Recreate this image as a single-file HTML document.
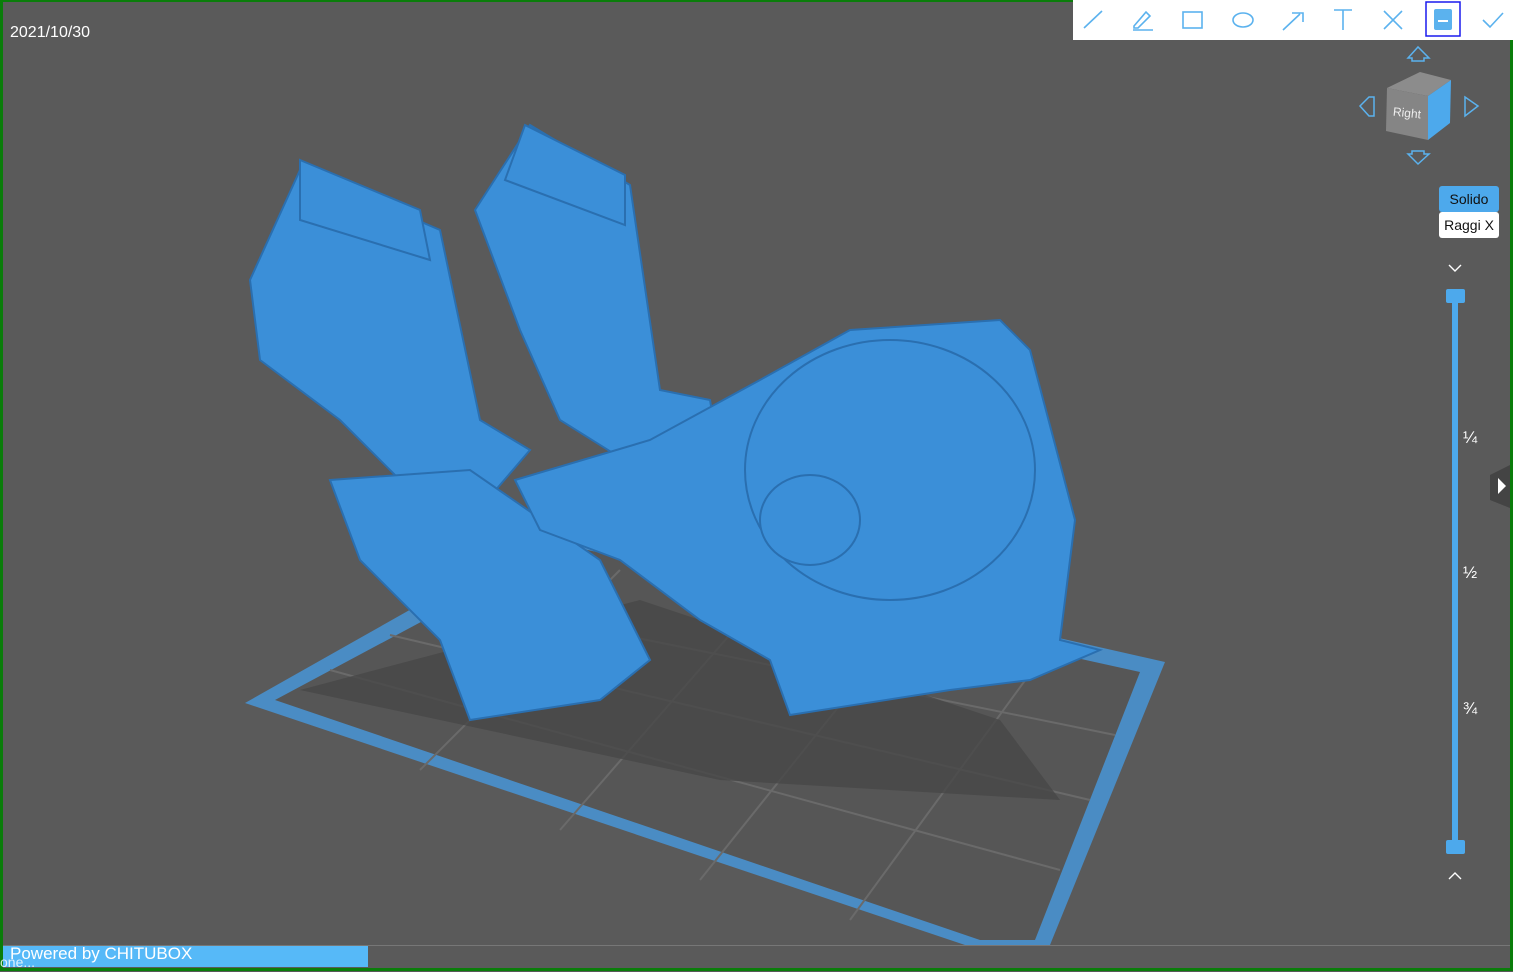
<!DOCTYPE html>
<html><head><style>
body{margin:0;width:1513px;height:972px;overflow:hidden;background:#5a5a5a;font-family:"Liberation Sans",sans-serif;}
#f{position:absolute;left:0;top:0;width:1507px;height:966px;border:3px solid #0a7d0a;border-top:2px solid #0a7d0a;background:#5a5a5a;}
</style></head><body>
<div id="f"></div>
<svg width="1513" height="972" style="position:absolute;left:0;top:0">
<polygon points="245,703 560,525 1165,662 1050,945 965,945" fill="#4a8cc4"/>
<polygon points="275,700 565,545 1140,672 1035,940 980,940" fill="#565656"/>
<g stroke="#6a6a6a" stroke-width="2">
<line x1="330" y1="670" x2="1060" y2="870"/><line x1="390" y1="635" x2="1090" y2="800"/><line x1="450" y1="600" x2="1115" y2="735"/>
<line x1="420" y1="770" x2="620" y2="570"/><line x1="560" y1="830" x2="760" y2="600"/><line x1="700" y1="880" x2="900" y2="630"/><line x1="850" y1="920" x2="1040" y2="660"/>
</g>
<polygon points="300,690 640,600 1000,720 1060,800 720,780" fill="#474747" opacity="0.8"/>
<g fill="#3b8fd8" stroke="#2a6fb0" stroke-width="2">
<polygon points="250,280 300,170 440,230 480,420 530,450 470,520 420,500 340,420 260,360"/>
<polygon points="475,210 530,125 630,185 660,390 710,400 720,460 640,470 560,420 520,330"/>
<polygon points="330,480 470,470 600,560 650,660 600,700 470,720 440,640 360,560"/>
<polygon points="515,480 650,440 760,380 850,330 1000,320 1030,350 1075,520 1060,640 1100,650 1030,680 950,690 790,715 770,660 700,620 620,560 540,530"/>
<ellipse cx="890" cy="470" rx="145" ry="130"/>
<ellipse cx="810" cy="520" rx="50" ry="45"/>
<polygon points="300,160 420,210 430,260 300,220"/>
<polygon points="525,125 625,175 625,225 505,180"/>
</g>
<rect x="1073" y="0" width="440" height="40" fill="#fff"/>
<g stroke="#5bb2ee" stroke-width="1.6" fill="none">
<line x1="1084" y1="28" x2="1102" y2="11"/>
<path d="M1134,26 L1146,12 L1150,16 L1138,28 L1134,28Z M1133,30 H1153"/>
<rect x="1183" y="12" width="19" height="16"/>
<ellipse cx="1243" cy="20" rx="10" ry="7"/>
<path d="M1283,30 L1300,14 M1292,13 H1303 V22"/>
<path d="M1334,10 H1352 M1343,10 V30"/>
<path d="M1384,11 L1402,29 M1402,11 L1384,29"/>
<path d="M1483,20 L1490,27 L1503,13"/>
</g>
<rect x="1426" y="2" width="34" height="34" fill="none" stroke="#1a1aee" stroke-width="1.5"/>
<rect x="1434" y="9" width="18" height="21" fill="#5bb2ee" rx="2"/>
<rect x="1438" y="20" width="10" height="2" fill="#fff"/>
<g stroke="#5bb2ee" stroke-width="1.5" fill="none">
<path d="M1408,58 L1418,47 L1429,58 L1424,58 L1424,61 L1412,61 L1412,58Z"/>
<path d="M1408,154 L1418,164 L1429,154 L1424,154 L1424,151 L1412,151 L1412,154Z"/>
<path d="M1369,97 L1360,106 L1369,116 L1374,116 L1374,97Z"/>
<path d="M1465,97 L1478,106 L1465,116Z"/>
</g>
<polygon points="1387,88 1420,72 1451,80 1428,96" fill="#8c8c8c"/>
<polygon points="1387,88 1428,96 1428,140 1386,131" fill="#858585"/>
<polygon points="1428,96 1451,80 1450,123 1428,140" fill="#4da9ec"/>
<text x="1393" y="117" fill="#eee" font-size="12" transform="rotate(6 1407 113)">Right</text>
<rect x="1439" y="186" width="60" height="26" rx="3" fill="#4da9ec"/>
<text x="1469" y="204" font-size="14" text-anchor="middle" fill="#111">Solido</text>
<rect x="1439" y="212" width="60" height="26" rx="3" fill="#fff"/>
<text x="1469" y="230" font-size="14" text-anchor="middle" fill="#111">Raggi X</text>
<path d="M1449,265 l6,6 l6,-6 M1449,879 l6,-6 l6,6" stroke="#fff" stroke-width="1.4" fill="none"/>
<rect x="1452" y="296" width="6" height="552" fill="#4da9ec"/>
<rect x="1446" y="289" width="19" height="14" rx="2" fill="#4da9ec"/>
<rect x="1446" y="840" width="19" height="14" rx="2" fill="#4da9ec"/>
<text x="1463" y="443" fill="#fff" font-size="17">¼</text>
<text x="1463" y="578" fill="#fff" font-size="17">½</text>
<text x="1463" y="714" fill="#fff" font-size="17">¾</text>
<polygon points="1510,465 1490,475 1490,500 1510,508" fill="#444"/>
<polygon points="1498,478 1506,486 1498,494" fill="#fff"/>
<rect x="3" y="945" width="1507" height="1" fill="#777"/>
<rect x="3" y="946" width="365" height="21" fill="#56b9f8"/>
<text x="10" y="959" fill="#fff" font-size="17">Powered by CHITUBOX</text>
<text x="0" y="967" fill="#fff" font-size="14" opacity="0.8">one...</text>
<text x="10" y="37" fill="#fff" font-size="16">2021/10/30</text>
</svg>
</body></html>
